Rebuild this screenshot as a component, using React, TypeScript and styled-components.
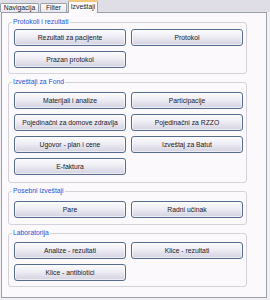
import React from "react";
import styled, { createGlobalStyle, css } from "styled-components";

const GlobalStyle = createGlobalStyle`
  html, body {
    margin: 0;
    padding: 0;
    background: #f1f0f4;
  }
  * {
    box-sizing: border-box;
  }
`;

const font = `"Liberation Sans", Arial, sans-serif`;

type Group = {
  title: string;
  top: number;
  bottom: number;
  buttons: string[];
};

const groups: Group[] = [
  {
    title: "Protokoli i rezultati",
    top: 3,
    bottom: 5,
    buttons: ["Rezultati za pacijente", "Protokol", "Prazan protokol"],
  },
  {
    title: "Izveštaji za Fond",
    top: 6,
    bottom: 7,
    buttons: [
      "Materijali i analize",
      "Participacije",
      "Pojedinačni za domove zdravlja",
      "Pojedinačni za RZZO",
      "Ugovor - plan i cene",
      "Izveštaj za Batut",
      "E-faktura",
    ],
  },
  {
    title: "Posebni izveštaji",
    top: 6,
    bottom: 6,
    buttons: ["Pare", "Radni učinak"],
  },
  {
    title: "Laboratorija",
    top: 5,
    bottom: 5,
    buttons: ["Analize - rezultati", "Klice - rezultati", "Klice - antibiotici"],
  },
];

const tabs = [
  { label: "Navigacija", width: 39 },
  { label: "Filter", width: 27 },
  { label: "Izveštaji", width: 30 },
];

function App() {
  return (
    <Window>
      <GlobalStyle />
      <TabStrip>
        {tabs.map((t, i) => (
          <Tab key={t.label} $active={i === 2} $width={t.width}>
            {t.label}
          </Tab>
        ))}
      </TabStrip>
      <Panel>
        {groups.map((g) => (
          <GroupBox key={g.title} $top={g.top} $bottom={g.bottom}>
            <Legend>{g.title}</Legend>
            <ButtonGrid>
              {g.buttons.map((b) => (
                <ActionButton key={b}>{b}</ActionButton>
              ))}
            </ButtonGrid>
          </GroupBox>
        ))}
      </Panel>
    </Window>
  );
}
export default App;

const Window = styled.div`
  width: 270px;
  height: 300px;
  overflow: hidden;
  font-family: ${font};
  background: #f1f0f4;
`;

const TabStrip = styled.div`
  display: flex;
  align-items: flex-end;
  height: 12px;
  background: #dfdee6;
`;

const Tab = styled.div<{ $active?: boolean; $width: number }>`
  width: ${(p) => p.$width}px;
  height: 9px;
  margin-right: 1px;
  display: flex;
  align-items: center;
  justify-content: center;
  font-size: 6.8px;
  line-height: 1;
  color: #1e1e1e;
  border: 1px solid #9aa0a8;
  border-bottom: none;
  border-radius: 2px 2px 0 0;
  background: linear-gradient(#ffffff, #e7e6ed);
  white-space: nowrap;
  ${(p) =>
    p.$active &&
    css`
      position: relative;
      z-index: 1;
      height: 13px;
      margin-bottom: -1px;
      padding-bottom: 1px;
      background: #fcf9fc;
      border-top: 2px solid #f3c77a;
    `}
`;

const Panel = styled.div`
  margin-left: 1px;
  width: 266px;
  height: 286px;
  border: 1px solid #9aa0a8;
  background: #fcf9fc;
  padding: 5px 0 0 6px;
  display: flex;
  flex-direction: column;
  gap: 4px;
`;

const GroupBox = styled.fieldset<{ $top: number; $bottom: number }>`
  margin: 0;
  width: 239px;
  min-width: 0;
  border: 1px solid #d3d2da;
  border-radius: 3px;
  padding: ${(p) => `${p.$top}px 4px ${p.$bottom}px 5px`};
`;

const Legend = styled.legend`
  margin-left: -2px;
  padding: 0 1px;
  height: 8px;
  line-height: 8px;
  font-size: 6.8px;
  color: #2255d4;
  white-space: nowrap;
`;

const ButtonGrid = styled.div`
  display: grid;
  grid-template-columns: 112px 112px;
  column-gap: 5px;
  row-gap: 5px;
`;

const ActionButton = styled.button`
  height: 17px;
  margin: 0;
  padding: 0;
  font-family: ${font};
  font-size: 6.8px;
  color: #18181f;
  border: 1px solid #566c8e;
  border-radius: 3px;
  background: linear-gradient(#fbfbfe 0%, #eeedf4 45%, #d2d1e0 100%);
  box-shadow: inset 0 0 0 1px rgba(255, 255, 255, 0.6);
  white-space: nowrap;
`;
